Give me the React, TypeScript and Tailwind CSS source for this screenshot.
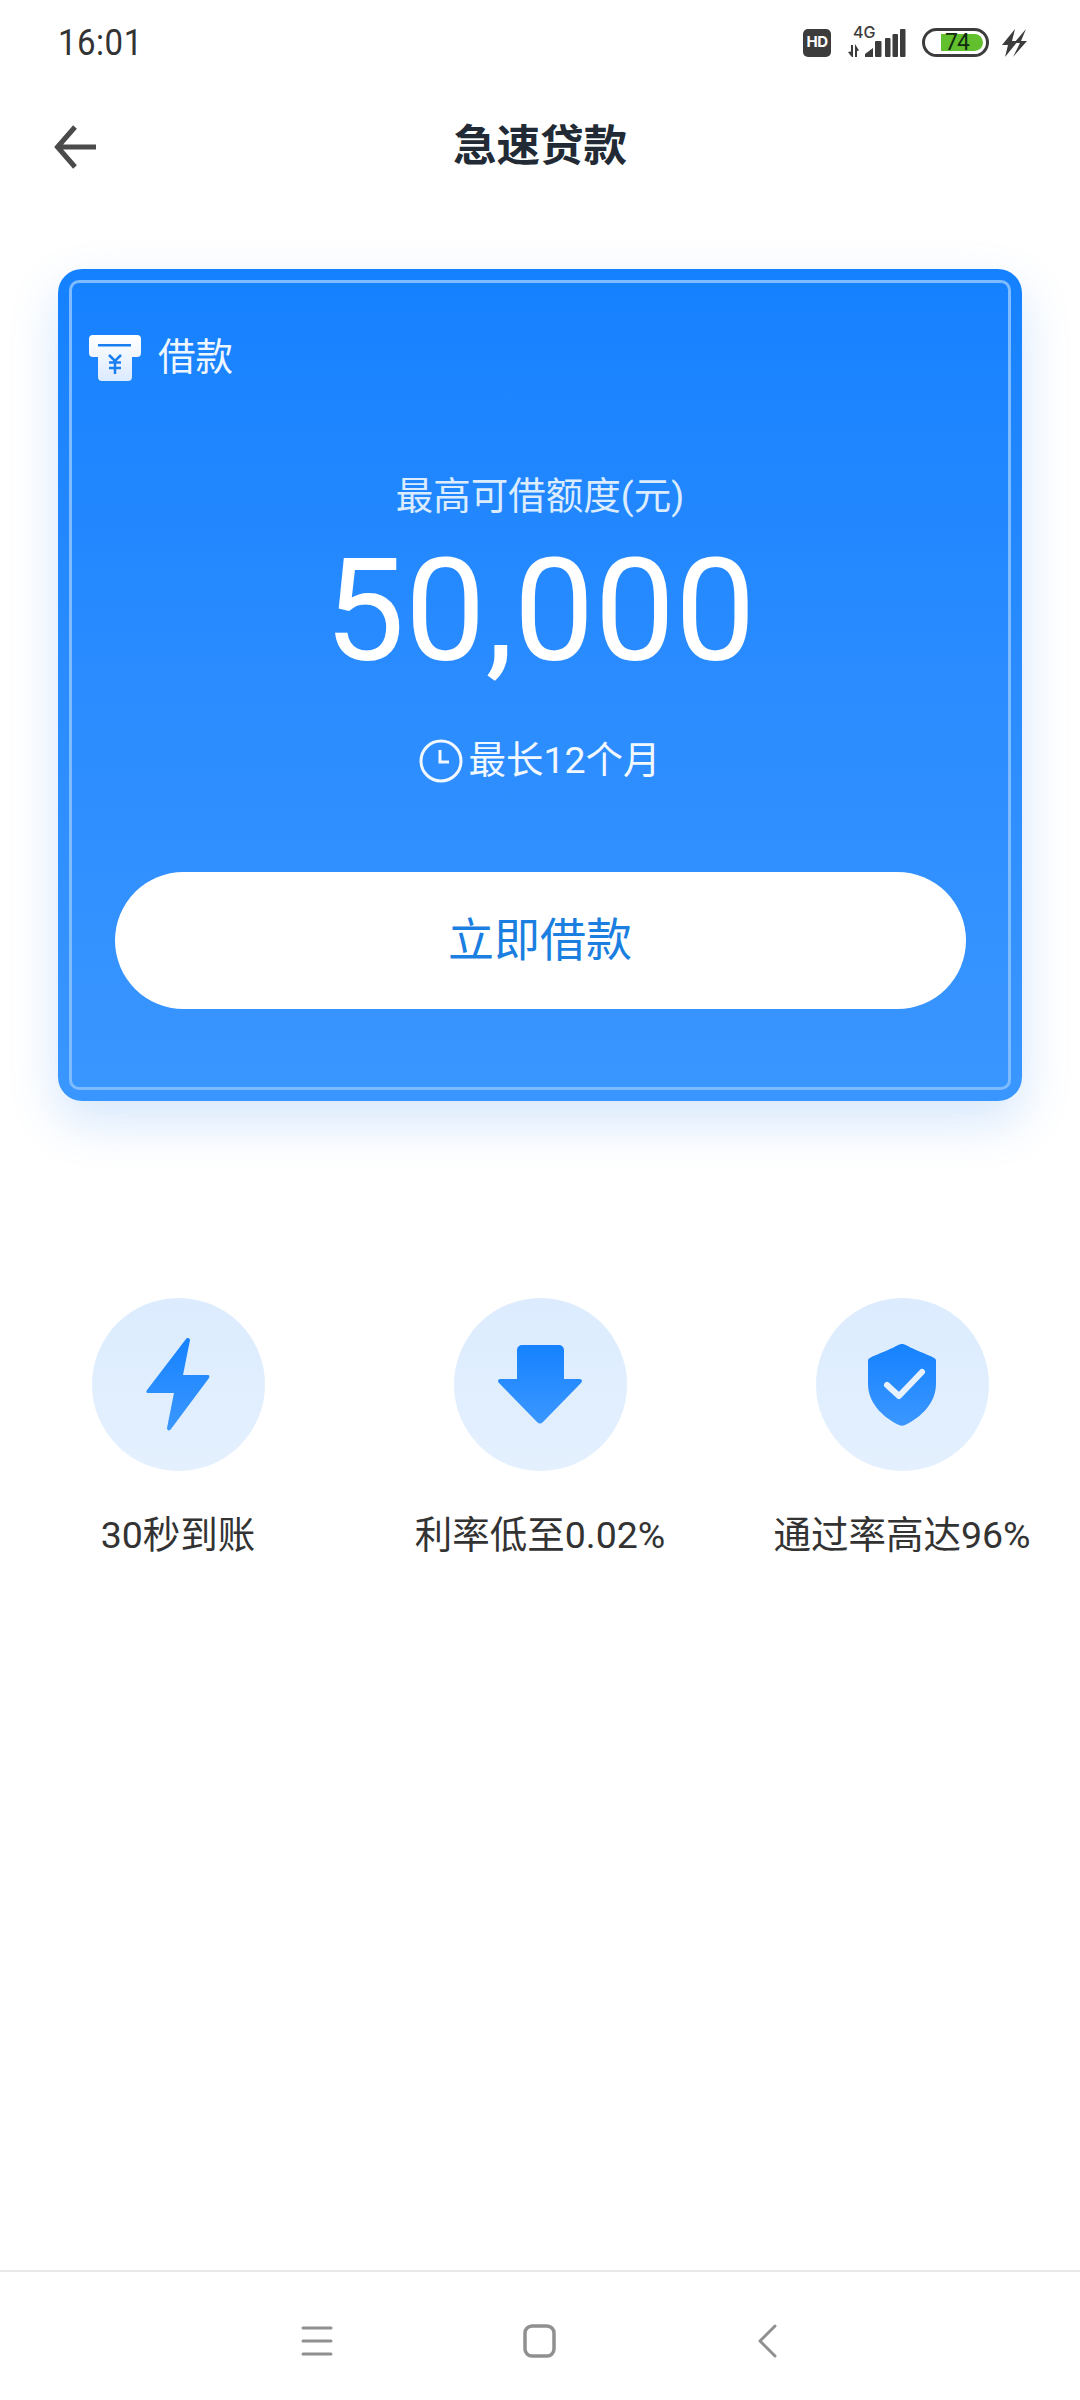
const CJK = "font-['Roboto','Noto_Sans_CJK_SC',sans-serif]";

function Signal() {
  return (
    <div className="relative w-[60px] h-[34px]">
      <span className="absolute left-[6px] top-[-2px] text-[#3c3c3c] text-[16px] leading-[16px] font-medium font-['Inter',sans-serif]">4G</span>
      <svg width="60" height="34" viewBox="0 0 60 34" className="absolute left-0 top-0">
        <g fill="#3c3c3c">
          <path d="M4 19h2v12H5l-1-1-3-4 3-.5zM8 18l4 6.500-2 .5v6H8z" />
          <path d="M18 31v-3l8-6v9z" />
          <rect x="28" y="15" width="6.500" height="16" rx="1" />
          <rect x="38" y="12" width="5.500" height="19" rx="1" />
          <rect x="45.500" y="8" width="5.500" height="23" rx="1" />
          <rect x="53" y="3" width="5.500" height="28" rx="1" />
        </g>
      </svg>
    </div>
  );
}

function StatusBar() {
  return (
    <div className="flex items-center justify-between h-[85px] pl-[58px] pr-[52px]">
      <span className="text-[#333] text-[33px] leading-none font-['Roboto',sans-serif] tracking-[0.5px] scale-y-[1.1]">16:01</span>
      <div className="flex items-center">
        <div className="w-[28px] h-[28px] rounded-[5px] bg-[#3c3c3c] flex items-center justify-center text-white text-[15px] font-bold font-['Inter',sans-serif] tracking-[-0.5px]">HD</div>
        <div className="ml-[16px]"><Signal /></div>
        <div className="ml-[15px] w-[67px] h-[29px] rounded-full border-[3px] border-[#3c3c3c] relative">
          <div className="absolute left-[16px] top-[3px] w-[42px] h-[17px] rounded-r-full bg-[#62c02e] flex items-center justify-start pl-[4px] text-[#0f2a10] text-[23px] leading-none font-['Roboto',sans-serif] tracking-[-1px]">74</div>
        </div>
        <svg className="ml-[11px]" width="28" height="30" viewBox="0 0 28 30">
          <path d="M15 1 2 17h6L5 29 18 13h-6zM26 1 14 15h6l-7 14L27 13h-6z" fill="#3c3c3c" />
        </svg>
      </div>
    </div>
  );
}

function Header() {
  return (
    <div className="relative flex items-center justify-center h-[124px]">
      <button className="absolute left-[54px] top-[40px]">
        <svg width="44" height="44" viewBox="0 0 44 44" fill="none" stroke="#4a4a4a" strokeWidth="5">
          <path d="M42 22H5M21 2 3.500 22 21 42" />
        </svg>
      </button>
      <h1 className={`${CJK} text-[43.5px] font-bold text-[#222b35] leading-none`}>急速贷款</h1>
    </div>
  );
}

function Card() {
  return (
    <div className="mx-[58px] mt-[60px] h-[832px] rounded-[24px] p-[11px] bg-gradient-to-b from-[#1581ff] to-[#3a96ff] shadow-[0_20px_50px_rgba(40,130,240,0.2)]">
      <div className={`h-full rounded-[10px] border-[3px] border-[#7fbcff] flex flex-col items-center ${CJK} text-white`}>
        <div className="self-start flex items-center mt-[52px] ml-[17px]">
          <svg width="52" height="46" viewBox="0 0 52 46">
            <defs>
              <linearGradient id="ticket" x1="0" y1="0" x2="0" y2="1">
                <stop offset="0" stopColor="#ffffff" />
                <stop offset="1" stopColor="#dbeaff" />
              </linearGradient>
            </defs>
            <path d="M4 0h44a4 4 0 0 1 4 4v14a4 4 0 0 1-4 4h-5v20a4 4 0 0 1-4 4H13a4 4 0 0 1-4-4V22H4a4 4 0 0 1-4-4V4a4 4 0 0 1 4-4z" fill="url(#ticket)" />
            <rect x="9" y="9" width="33" height="2.5" fill="#1a7fee" />
            <path d="M20 20l6 6 6-6M20 27.500h12M20 33h12M26 26v13" fill="none" stroke="#1a7fee" strokeWidth="2.5" />
          </svg>
          <span className="ml-[17px] text-[37.5px] leading-none text-[#eef6ff]">借款</span>
        </div>
        <div className="mt-[97px] text-[37.5px] leading-none text-[#dcecff]">最高可借额度(元)</div>
        <div className="mt-[20px] text-[143.5px] leading-[150px] font-['Roboto',sans-serif]">50,000</div>
        <div className="mt-[53px] flex items-center text-[37.5px] leading-none text-[#f2f8ff]">
          <svg width="44" height="44" viewBox="0 0 44 44" fill="none" stroke="#f2f8ff" strokeWidth="3">
            <circle cx="22" cy="22" r="20" />
            <path d="M21 11v12h9" />
          </svg>
          <span className="ml-[5px]">最长12个月</span>
        </div>
        <button className="mt-[89px] w-[851px] h-[137px] rounded-full bg-white text-[#1a7fe0] text-[46px] leading-none">立即借款</button>
      </div>
    </div>
  );
}

function Feature({ label, children }: { label: string; children: React.ReactNode }) {
  return (
    <div className={`w-[362px] shrink-0 flex flex-col items-center ${CJK}`}>
      <div className="w-[173px] h-[173px] rounded-full bg-gradient-to-b from-[#dcecfe] to-[#e4f0fe] flex items-center justify-center">{children}</div>
      <div className="mt-[46px] text-[37.5px] leading-none text-[#333] whitespace-nowrap">{label}</div>
    </div>
  );
}

function Grad({ id }: { id: string }) {
  return (
    <defs>
      <linearGradient id={id} x1="0" y1="0" x2="0" y2="1">
        <stop offset="0" stopColor="#1682ff" />
        <stop offset="1" stopColor="#3b97ff" />
      </linearGradient>
    </defs>
  );
}

function Features() {
  return (
    <div className="flex justify-center mt-[197px]">
      <Feature label="30秒到账">
        <svg width="64" height="93" viewBox="0 0 64 93">
          <Grad id="bolt" />
          <path d="M42 0c1 0 2 1 2 2l-7 35h25c1 0 2 1 1 3L25 91c-1 2-4 2-4-1l7-35H2c-2 0-2-2-1-3L40 1c.6-.6 1-1 2-1z" fill="url(#bolt)" />
        </svg>
      </Feature>
      <Feature label="利率低至0.02%">
        <svg width="84" height="79" viewBox="0 0 84 79">
          <Grad id="down" />
          <path d="M24 0h37a5 5 0 0 1 5 5v29h15c3 0 4 2 2 4L45 77c-2 2-4 2-6 0L1 38c-2-2-1-4 2-4h16V5a5 5 0 0 1 5-5z" fill="url(#down)" />
        </svg>
      </Feature>
      <Feature label="通过率高达96%">
        <svg width="70" height="82" viewBox="0 0 70 82">
          <Grad id="shield" />
          <path d="M35 0c3 0 5 2 14 6 9 4 19 7 20 10v24c0 22-20 36-31 41-2 1-4 1-6 0C21 76 1 62 1 40V16C2 13 12 10 21 6c9-4 11-6 14-6z" fill="url(#shield)" />
          <path d="M20 41l12 11 23-24" fill="none" stroke="#e8f2ff" strokeWidth="6" strokeLinecap="round" strokeLinejoin="round" />
        </svg>
      </Feature>
    </div>
  );
}

function NavBar() {
  return (
    <div className="mt-auto h-[130px] border-t-2 border-[#e8e8e8] flex items-start pt-[52px]">
      <svg className="ml-[301px] mt-[1px]" width="32" height="32" viewBox="0 0 32 32" fill="none" stroke="#909090" strokeWidth="3" strokeLinecap="round">
        <path d="M2 3h28M2 16h28M2 29h28" />
      </svg>
      <svg className="ml-[190px]" width="34" height="34" viewBox="0 0 34 34" fill="none" stroke="#909090" strokeWidth="3.5">
        <rect x="2" y="2" width="29" height="30" rx="7" />
      </svg>
      <svg className="ml-[200px]" width="20" height="34" viewBox="0 0 20 34" fill="none" stroke="#909090" strokeWidth="3" strokeLinecap="round" strokeLinejoin="round">
        <path d="M18 2 3 17l15 15" />
      </svg>
    </div>
  );
}

export default function App() {
  return (
    <div className="w-[1080px] h-[2400px] bg-white flex flex-col overflow-hidden">
      <StatusBar />
      <Header />
      <Card />
      <Features />
      <NavBar />
    </div>
  );
}
